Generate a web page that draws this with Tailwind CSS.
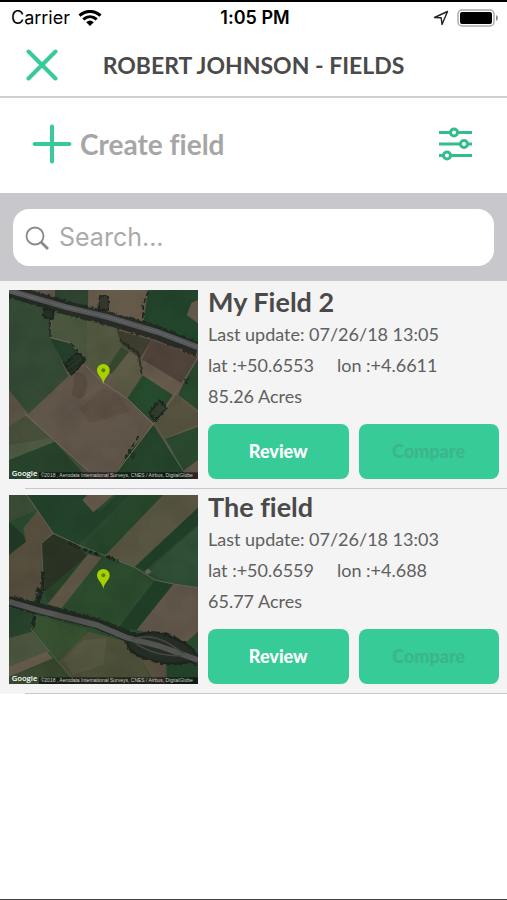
<!DOCTYPE html>
<html lang="en">
<head>
    <meta charset="UTF-8">
    <meta name="viewport" content="width=device-width, initial-scale=1.0">
    <title>Robert Johnson - Fields</title>
    <script src="https://cdn.jsdelivr.net/npm/@tailwindcss/browser@4"></script>
</head>
<body class="min-h-screen flex flex-col bg-white border-t-2 border-b border-b-[#444444] border-t-black font-['Lato',sans-serif] text-[#4a4a4a] [font-variant-ligatures:none]">
    <!-- Status Bar -->
    <div class="grid grid-cols-3 items-center h-8 pl-[11px] pr-2 font-['Inter',sans-serif] text-black">
        <div class="flex items-center gap-2 text-lg">
            <span>Carrier</span>
            <svg class="w-6 h-4" viewBox="0 0 24 16" fill="none" stroke="#000" stroke-width="3">
                <path d="M1.5 5.6C7.500 0 16.500 0 22.500 5.600"/>
                <path d="M5.300 9.400C9.300 5.800 14.700 5.800 18.700 9.400"/>
                <path d="M12 16L8.200 12.200Q12 9 15.800 12.200Z" fill="#000" stroke="none"/>
            </svg>
        </div>
        <div class="text-center text-lg font-semibold whitespace-nowrap">1:05 PM</div>
        <div class="flex items-center justify-end gap-2">
            <svg class="w-4 h-4" viewBox="0 0 16 16" fill="none" stroke="#222" stroke-width="1.400" stroke-linejoin="round">
                <path d="M14.500 1.500L1.500 7.500L8.200 7.800L9 14.500Z"/>
            </svg>
            <svg class="w-[42px] h-[18px]" viewBox="0 0 42 18">
                <rect x="1" y="1" width="36" height="16" rx="4" fill="none" stroke="#aaa" stroke-width="1.500"/>
                <rect x="3" y="3" width="32" height="12" rx="2"/>
                <path d="M39 6Q41 7 41 9T39 12Z" fill="#888"/>
            </svg>
        </div>
    </div>

    <!-- Header -->
    <header class="grid grid-cols-[84px_1fr_84px] items-center h-16 border-b-2 border-[#d0d0d0]">
        <button type="button" aria-label="Close" class="flex justify-center">
            <svg class="w-8 h-8" viewBox="0 0 32 32" stroke="#36cb97" stroke-width="4" stroke-linecap="round">
                <path d="M2.500 2.500L29.500 29.500M29.500 2.500L2.500 29.500"/>
            </svg>
        </button>
        <h1 class="text-center text-[23px] font-bold whitespace-nowrap">ROBERT JOHNSON - FIELDS</h1>
    </header>

    <!-- Create + Filter -->
    <div class="flex items-center justify-between h-[95px] pb-1 pl-8 pr-[34px]">
        <button type="button" class="flex items-center gap-2 text-[28px] font-bold text-[#a6a6a6]">
            <svg class="w-10 h-10" viewBox="0 0 40 40" stroke="#36cb97" stroke-width="4" stroke-linecap="round">
                <path d="M20 2.500V37.500M2.500 20H37.500"/>
            </svg>
            Create field
        </button>
        <button type="button" aria-label="Filter">
            <svg class="w-9 h-9" viewBox="0 0 36 36" fill="#fff" stroke="#32bd8a" stroke-width="3">
                <path d="M2 6.500H35M2 18H35M2 29.500H35"/>
                <circle cx="17" cy="6.500" r="3.500"/>
                <circle cx="27" cy="18" r="3.500"/>
                <circle cx="10" cy="29.500" r="3.500"/>
            </svg>
        </button>
    </div>

    <!-- Search -->
    <div class="bg-[#c8c7cc] pt-4 pb-[15px] px-[13px]">
        <label class="flex items-center gap-[10px] h-[57px] px-3 bg-white rounded-2xl">
            <svg class="w-6 h-6 shrink-0" viewBox="0 0 24 24" fill="none" stroke="#8a8a8a">
                <circle cx="10" cy="10" r="8.500" stroke-width="1.800"/>
                <path d="M16 16L23 23" stroke-width="2.800"/>
            </svg>
            <input type="search" aria-label="Search" placeholder="Search..." class="w-full min-w-0 font-['Inter',sans-serif] text-[25px] placeholder:text-[#aaaaaa] outline-none">
        </label>
    </div>

    <!-- Field List -->
    <main class="bg-[#f4f4f4] pt-[3px]">
        <article>
            <div class="flex gap-[10px] pt-[6px] pb-[9px] pl-[9px] pr-2">
                <svg class="w-[189px] h-[189px] shrink-0" viewBox="27 30 567 567" role="img" aria-label="Map of My Field 2">
                    <defs>
                        <filter id="rough" x="-10%" y="-10%" width="120%" height="120%">
                            <feTurbulence type="fractalNoise" baseFrequency="0.1" numOctaves="2" result="n"/>
                            <feDisplacementMap in="SourceGraphic" in2="n" scale="12" xChannelSelector="R" yChannelSelector="G"/>
                            <feGaussianBlur stdDeviation="1.500"/>
                        </filter>
                        <filter id="soil" x="0" y="0" width="100%" height="100%">
                            <feTurbulence type="fractalNoise" baseFrequency="0.012" numOctaves="3"/>
                            <feColorMatrix values="0 0 0 0 0  0 0 0 0 0  0 0 0 0 0  1.500 0 0 0 -0.600"/>
                        </filter>
                    </defs>
                    <rect x="27" y="30" width="567" height="567" fill="#61564a"/>
                    <path d="M27 30L150 80L150 172L205 288L85 402L27 330Z" fill="#354b36"/>
                    <path d="M27 330L85 402L60 425L27 440Z" fill="#5c5547"/>
                    <path d="M165 30H265V105L165 70Z" fill="#2e4330"/>
                    <path d="M265 30H445L425 135L265 95Z" fill="#665b4b"/>
                    <path d="M445 30H594V190L430 130Z" fill="#23452c"/>
                    <path d="M575 68L594 60V130L560 105Z" fill="#665a4c"/>
                    <path d="M165 90L355 145L365 200L310 290L260 250L215 190L150 172Z" fill="#4a573e"/>
                    <path d="M260 120L355 150L365 195L300 280L262 255Z" fill="#585b43" opacity=".7"/>
                    <path d="M150 175L205 188L258 240L215 288L200 270Z" fill="#24402a"/>
                    <path d="M365 200L388 215L335 282L318 270Z" fill="#36472f"/>
                    <path d="M388 215L425 245L425 285L382 355L328 290Z" fill="#5e5b46"/>
                    <path d="M350 150L455 180L420 235L365 195Z" fill="#403e30"/>
                    <path d="M455 180L594 230L540 315L425 240Z" fill="#50443b"/>
                    <path d="M430 240L545 310L520 350L425 285Z" fill="#675b4d"/>
                    <path d="M428 286L518 345L460 428L382 356Z" fill="#264a2e"/>
                    <path d="M594 235V390L535 345L555 300Z" fill="#29492e"/>
                    <path d="M530 345L594 400V435L495 475L465 430Z" fill="#55533f"/>
                    <path d="M462 433L550 573L555 597H340L385 520Z" fill="#24442b"/>
                    <path d="M496 476L594 440V540L550 573Z" fill="#2a4a2f"/>
                    <path d="M594 540V597H560L550 573Z" fill="#63584b"/>
                    <path d="M27 440L80 405L265 573V597H27Z" fill="#474f3b"/>
                    <path d="M27 520L160 480L265 597H27Z" fill="#28432b"/>
                    <path d="M27 495L150 475L165 485L27 540Z" fill="#4d5942"/>
                    <path d="M225 275Q270 275 260 325T215 345Z" fill="#54483e" opacity=".7"/>
                    <path d="M310 325L355 345L390 395L270 430L240 385Z" fill="#57493e" opacity=".5"/>
                    <g fill="none" stroke="#7a705e" stroke-width="3">
                        <path d="M75 402L265 573"/>
                        <path d="M258 258L310 308L384 358L460 432L355 570"/>
                        <path d="M150 172L210 188L258 240M460 432L550 573M460 432L545 315L594 232" stroke-width="2"/>
                        <path d="M310 308L205 390M496 475L594 438" stroke-width="1.500" opacity=".6"/>
                    </g>
                    <g filter="url(#rough)" fill="none" stroke="#1c251e">
                        <path d="M27 32L200 84L320 114L470 158L594 208" stroke-width="42" opacity=".85"/>
                        <path d="M150 90V170M210 190L258 240M360 180L415 220L425 280" stroke-width="5" opacity=".8"/>
                        <path d="M445 35L430 75L428 125M415 470L375 535" stroke-width="5" stroke-dasharray="14 8"/>
                        <path d="M130 85L162 92L158 118L132 112Z" fill="#273027" stroke-width="5"/>
                        <path d="M193 250L235 218L255 242L215 285Z" fill="#263527" stroke-width="5"/>
                        <path d="M200 262L240 232M208 274L248 244" stroke-width="3"/>
                        <path d="M298 48H325V90H298Z" fill="#39382f" stroke-width="4"/>
                        <path d="M448 398L480 360L500 385L465 423Z" fill="#303c2d" stroke-width="5"/>
                        <path d="M552 300L568 292L560 312ZM390 515L405 525L398 535Z" stroke-width="3"/>
                    </g>
                    <path d="M27 32L200 82L320 110L470 155L594 202" fill="none" stroke="#57585a" stroke-width="17"/>
                    <path d="M27 32L200 82L320 110L470 155L594 202" fill="none" stroke="#6d6d6d" stroke-width="2"/>
                    <rect x="27" y="30" width="567" height="567" filter="url(#soil)" opacity=".12"/>
                    <path d="M310 312C307 292 291 286 291 271A19 19 0 0 1 329 271C329 286 313 292 310 312Z" fill="#a4d200"/>
                    <circle cx="310" cy="271" r="6" fill="#5f7d10"/>
                    <rect x="117" y="577" width="477" height="20" fill="#000" opacity=".55"/>
                    <text x="35" y="589" font-family="Open Sans, sans-serif" font-size="23" font-weight="600" fill="#fff">Google</text>
                    <text x="122" y="592" font-family="Liberation Sans, sans-serif" font-size="15" fill="#ccc">©2018 , Aerodata International Surveys, CNES / Airbus, DigitalGlobe</text>
                </svg>
                <div class="flex-1 min-w-0 flex flex-col">
                    <h2 class="text-[27px] leading-6 font-bold">My Field 2</h2>
                    <p class="mt-[5px] text-[18px] leading-[31px] text-[#606060] whitespace-nowrap">Last update: 07/26/18 13:05</p>
                    <p class="flex text-[18px] leading-[31px] text-[#606060] whitespace-nowrap"><span class="w-[129px]">lat :+50.6553</span><span>lon :+4.6611</span></p>
                    <p class="text-[18px] leading-[31px] text-[#606060]">85.26 Acres</p>
                    <div class="grid grid-cols-2 gap-[10px] mt-auto">
                        <button type="button" class="h-[55px] rounded-lg bg-[#36cb97] text-[18px] font-black text-white">Review</button>
                        <button type="button" disabled class="h-[55px] rounded-lg bg-[#36cb97] text-[18px] font-black text-[#3db58c]">Compare</button>
                    </div>
                </div>
            </div>
            <div class="ml-[25px] h-px bg-[#c8c7cc]"></div>
        </article>

        <article>
            <div class="flex gap-[10px] pt-[6px] pb-[9px] pl-[9px] pr-2">
                <svg class="w-[189px] h-[189px] shrink-0" viewBox="27 30 567 567" role="img" aria-label="Map of The field">
                    <rect x="27" y="30" width="567" height="567" fill="#2b4a30"/>
                    <path d="M27 30H80L110 75L27 110Z" fill="#3a4c36"/>
                    <path d="M80 30H255L300 80L350 30H390L235 180L160 145Z" fill="#23422b"/>
                    <path d="M27 110L70 150L78 170L27 210Z" fill="#213b27"/>
                    <path d="M70 130L112 78L160 145L125 175V300L100 350L27 332V210L78 170Z" fill="#574f3e"/>
                    <path d="M262 30H340L280 82L247 45Z" fill="#62584a"/>
                    <path d="M390 30H490L315 212L250 190Z" fill="#27472c"/>
                    <path d="M490 30H594V70L405 245L315 212Z" fill="#585642"/>
                    <path d="M594 68V120L435 255L405 245Z" fill="#203f28"/>
                    <path d="M594 122V308L520 295L440 262Z" fill="#304f37"/>
                    <path d="M125 175L160 147L235 180L262 215L135 320Z" fill="#2b3324"/>
                    <path d="M262 210L135 320L145 362L260 240Z" fill="#29442b"/>
                    <path d="M265 208L305 218L185 370L143 358Z" fill="#5e5545"/>
                    <path d="M305 218L465 285L355 430L185 372Z" fill="#2c4c2e"/>
                    <path d="M465 285L520 297L410 435L355 430Z" fill="#203e27"/>
                    <path d="M520 298L594 308V440L560 472L410 435Z" fill="#61564a"/>
                    <path d="M594 440V520L555 475Z" fill="#294a2d"/>
                    <path d="M27 368L105 385L95 440L27 460Z" fill="#28422c"/>
                    <path d="M105 388L265 435L245 470L175 530L95 440Z" fill="#37502f"/>
                    <path d="M27 460L95 440L150 500L27 550Z" fill="#4b543e"/>
                    <path d="M27 545L140 500L160 520L27 575Z" fill="#65594a"/>
                    <path d="M27 575L172 522L230 597H27Z" fill="#38492f"/>
                    <path d="M265 440L400 475L460 597H230L175 530Z" fill="#4c5039"/>
                    <path d="M250 465L320 460L310 540L220 570L190 525Z" fill="#5b5a43" opacity=".7"/>
                    <path d="M405 490L500 530L500 597H465Z" fill="#584f3f"/>
                    <path d="M500 535L594 530V597H500Z" fill="#25442b"/>
                    <g fill="none" stroke="#6f6d5a" stroke-width="2.500">
                        <path d="M80 30L160 145L235 180L400 245L465 285L520 297L594 308"/>
                        <path d="M160 145L125 175L130 310M105 390L95 435L230 597" stroke-width="2"/>
                        <path d="M435 260L445 252L453 260L443 268Z" fill="#75685a"/>
                        <path d="M490 30L315 212M262 212L143 358" stroke-width="1.500" opacity=".5"/>
                    </g>
                    <g filter="url(#rough)" fill="none" stroke="#1d251f">
                        <path d="M27 348L120 372L290 415L400 460L594 525" stroke-width="34" opacity=".85"/>
                        <path d="M385 465Q445 425 515 455T594 520Q530 550 450 525T385 465Z" fill="#252d26" stroke-width="7"/>
                        <path d="M128 260V310L115 355M103 390L98 435" stroke-width="8"/>
                        <path d="M118 310L108 350" stroke-width="12" stroke-dasharray="13 6"/>
                        <path d="M205 172L240 190M250 193L300 210M320 215L355 228" stroke-width="9" stroke-dasharray="12 5"/>
                    </g>
                    <g fill="none" stroke="#555654">
                        <path d="M27 350L120 377L290 420L380 458L475 482L594 525" stroke-width="17"/>
                        <path d="M395 462Q450 445 500 472L555 507M400 470Q460 515 545 512" stroke-width="5" stroke="#454844"/>
                    </g>
                    <rect x="27" y="30" width="567" height="567" filter="url(#soil)" opacity=".12"/>
                    <path d="M310 312C307 292 291 286 291 271A19 19 0 0 1 329 271C329 286 313 292 310 312Z" fill="#a4d200"/>
                    <circle cx="310" cy="271" r="6" fill="#5f7d10"/>
                    <rect x="117" y="577" width="477" height="20" fill="#000" opacity=".55"/>
                    <text x="35" y="589" font-family="Open Sans, sans-serif" font-size="23" font-weight="600" fill="#fff">Google</text>
                    <text x="122" y="592" font-family="Liberation Sans, sans-serif" font-size="15" fill="#ccc">©2018 , Aerodata International Surveys, CNES / Airbus, DigitalGlobe</text>
                </svg>
                <div class="flex-1 min-w-0 flex flex-col">
                    <h2 class="text-[27px] leading-6 font-bold">The field</h2>
                    <p class="mt-[5px] text-[18px] leading-[31px] text-[#606060] whitespace-nowrap">Last update: 07/26/18 13:03</p>
                    <p class="flex text-[18px] leading-[31px] text-[#606060] whitespace-nowrap"><span class="w-[129px]">lat :+50.6559</span><span>lon :+4.688</span></p>
                    <p class="text-[18px] leading-[31px] text-[#606060]">65.77 Acres</p>
                    <div class="grid grid-cols-2 gap-[10px] mt-auto">
                        <button type="button" class="h-[55px] rounded-lg bg-[#36cb97] text-[18px] font-black text-white">Review</button>
                        <button type="button" disabled class="h-[55px] rounded-lg bg-[#36cb97] text-[18px] font-black text-[#3db58c]">Compare</button>
                    </div>
                </div>
            </div>
            <div class="ml-[25px] h-px bg-[#c8c7cc]"></div>
        </article>
    </main>
</body>
</html>
